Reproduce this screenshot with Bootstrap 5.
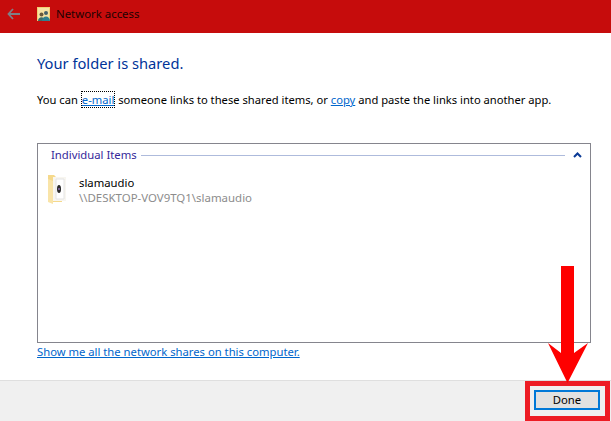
<!DOCTYPE html>
<html lang="en">
<head>
<meta charset="utf-8">
<title>Network access</title>
<link href="https://cdn.jsdelivr.net/npm/bootstrap@5.3.0/dist/css/bootstrap.min.css" rel="stylesheet">
<style>
html,body{height:421px;overflow:hidden;background:#fff}
body{font-family:"Noto Sans","Open Sans",sans-serif;font-size:11.5px;color:#000;line-height:16px}
.shell{width:611px;height:421px;position:relative}
.titlebar{height:33px;background:#c60c0c;padding-left:7px;padding-bottom:5px}
.backarrow{width:13px;height:12px}
.app-ico{width:13px;height:14px;margin-left:17px}
.ttl{font-size:11.4px;color:#1d0202;margin-left:6px}
.main{height:347px;padding:20px 20px 0 37px}
.heading{font-size:14.7px;line-height:20px;color:#003399;margin:0}
.intro{margin:19px 0 0;height:51px;white-space:nowrap;font-size:11.2px}
.lnk{color:#0066cc;text-decoration:underline}
.focused{outline:1px dotted #000;outline-offset:0;margin:0 1px}
.groupbox{height:200px;border:1px solid #85858d;padding:3px 8px 0 13px}
.grp-label{color:#35289a;white-space:nowrap;font-size:11.3px}
.grp-rule{height:1px;background:#aebbdc}
.chev{width:9px;height:6px;margin-left:8px}
.entry{margin:14px 0 0 -3px;gap:12px}
.fld{width:18px;height:30px;margin-top:-3px}
.nm{font-size:11.3px;line-height:14px;margin-top:-1px;margin-left:1px}
.pth{font-size:11.45px;line-height:15px;color:#8c8c8c;margin-left:1px}
.all-link{margin-top:1px;font-size:11.25px}
.footerbar{height:41px;background:#f0f0f0;border-top:1px solid #dfdfdf;padding-right:1px}
.callout{width:85px;height:40px;border:5px solid #ed1c24;background:#f0f0f0;padding:4px}
.donebtn{width:66px;height:20px;padding:0;border:2px solid #0078d7;border-radius:0;background:#e1e1e1;color:#000;font-size:11.3px;line-height:14px}
.redarrow{position:absolute;left:540px;top:262px;width:56px;height:125px}
</style>
</head>
<body>
<div class="shell d-flex flex-column">
  <div class="titlebar d-flex align-items-center">
    <svg class="backarrow" viewBox="0 0 13 12"><path d="M6 1 1.5 6 6 11M2 6h11" fill="none" stroke="#7f7f86" stroke-width="1.8"/></svg>
    <svg class="app-ico" viewBox="0 0 13 14"><rect width="13" height="14" fill="#f2cf73"/><rect x="1" y="1" width="11" height="12" fill="#f7e2a4"/><circle cx="4.5" cy="7.5" r="2" fill="#6b5a3c"/><path d="M1 14c0-5 7-5 7 0z" fill="#3f6b6a"/><circle cx="9" cy="6" r="2" fill="#45606a"/><path d="M5 14c0-6 8-6 8 0z" fill="#2f7f8f"/></svg>
    <span class="ttl">Network access</span>
  </div>
  <div class="main">
    <h1 class="heading fw-normal">Your folder is shared.</h1>
    <p class="intro">You can <a href="#" class="lnk focused">e-mail</a> someone links to these shared items, or <a href="#" class="lnk">copy</a> and paste the links into another app.</p>
    <div class="groupbox">
      <div class="d-flex align-items-center">
        <span class="grp-label me-1">Individual Items</span>
        <div class="grp-rule flex-grow-1"></div>
        <svg class="chev" viewBox="0 0 9 6"><path d="M1 5 4.5 1.5 8 5" fill="none" stroke="#0a3a96" stroke-width="2"/></svg>
      </div>
      <div class="entry d-flex">
        <svg class="fld" viewBox="0 0 18 30"><path d="M0 1h6l2 2h6v25H0z" fill="#f5d98c"/><path d="M5 3h13v24H5z" fill="#f8f6f0"/><path d="M0 5l5 2v23l-5-2z" fill="#f9e4a8"/><path d="M8 5h8v20H8z" fill="#fff" stroke="#e4e4e4"/><ellipse cx="11" cy="15" rx="2" ry="4" fill="#2a2a2a"/><circle cx="11" cy="15" r="1" fill="#8a6fb0"/></svg>
        <div>
          <div class="nm">slamaudio</div>
          <div class="pth">\\DESKTOP-VOV9TQ1\slamaudio</div>
        </div>
      </div>
    </div>
    <div class="all-link"><a href="#" class="lnk">Show me all the network shares on this computer.</a></div>
  </div>
  <div class="footerbar d-flex justify-content-end">
    <div class="callout"><button type="button" class="btn donebtn d-block">Done</button></div>
  </div>
  <svg class="redarrow" viewBox="0 0 56 125"><path d="M21 4h13v87L48 81 27.5 121 8 81l13 10z" fill="#fe0000"/></svg>
</div>
</body>
</html>
